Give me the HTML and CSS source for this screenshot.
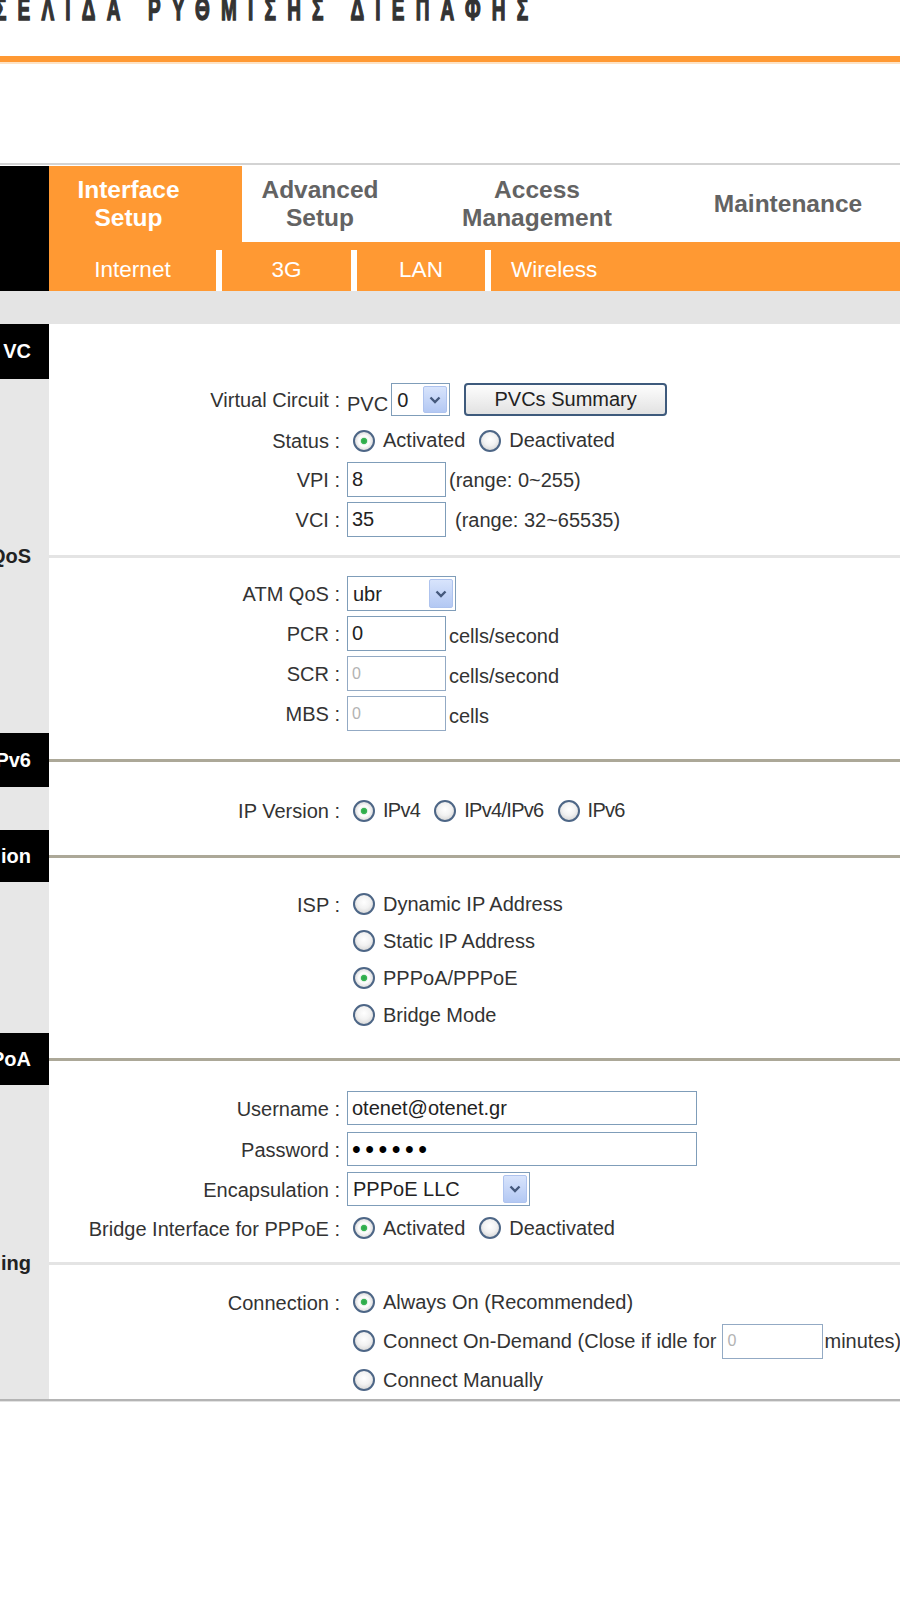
FILE: index.html
```html
<!DOCTYPE html>
<html lang="el">
<head>
<meta charset="utf-8">
<title>Interface Setup - Internet</title>
<link rel="stylesheet" href="styles.css">
</head>
<body>
<header class="page-head">
  <h1 class="title">ΣΕΛΙΔΑ ΡΥΘΜΙΣΗΣ ΔΙΕΠΑΦΗΣ</h1>
  <div class="orange-rule"></div>
</header>

<nav class="nav">
  <div class="nav-side"></div>
  <div class="nav-main">
    <div class="tabs">
      <div class="tab tab-active tab-1">Interface<br>Setup</div>
      <div class="tab tab-2">Advanced<br>Setup</div>
      <div class="tab tab-3">Access<br>Management</div>
      <div class="tab tab-4">Maintenance</div>
    </div>
    <div class="subnav">
      <div class="sub sub-internet">Internet</div>
      <div class="sep"></div>
      <div class="sub sub-3g">3G</div>
      <div class="sep"></div>
      <div class="sub sub-lan">LAN</div>
      <div class="sep"></div>
      <div class="sub sub-wireless">Wireless</div>
    </div>
  </div>
</nav>
<div class="graybar"></div>

<main class="content">
  <!-- ATM VC -->
  <div class="row head h55">
    <div class="side side-title">VC</div>
    <div class="main"></div>
  </div>
  <div class="row h40">
    <div class="side"></div>
    <div class="label">Virtual Circuit :</div>
    <div class="value">
      <span class="pre">PVC</span>
      <span class="sel sel-pvc"><select><option>0</option></select><span class="arrow"><svg viewBox="0 0 12 8" width="12" height="8"><path d="M1.5 1.5 L6 6 L10.5 1.5" fill="none" stroke="#45597c" stroke-width="2.4"/></svg></span></span>
      <button class="btn" type="button">PVCs Summary</button>
    </div>
  </div>
  <div class="row h40 pt1">
    <div class="side"></div>
    <div class="label">Status :</div>
    <div class="value">
      <label class="opt"><input class="radio" type="radio" name="status" checked>Activated</label>
      <label class="opt"><input class="radio" type="radio" name="status">Deactivated</label>
    </div>
  </div>
  <div class="row h40">
    <div class="side"></div>
    <div class="label">VPI :</div>
    <div class="value"><input class="txt" type="text" value="8"><span class="note">(range: 0~255)</span></div>
  </div>
  <div class="row h40">
    <div class="side"></div>
    <div class="label">VCI :</div>
    <div class="value"><input class="txt" type="text" value="35"><span class="note note-gap">(range: 32~65535)</span></div>
  </div>

  <!-- QoS -->
  <div class="row subhead h34">
    <div class="side side-title">QoS</div>
    <div class="main"><div class="rule-light"></div></div>
  </div>
  <div class="row h40">
    <div class="side"></div>
    <div class="label">ATM QoS :</div>
    <div class="value">
      <span class="sel sel-qos"><select><option>ubr</option></select><span class="arrow"><svg viewBox="0 0 12 8" width="12" height="8"><path d="M1.5 1.5 L6 6 L10.5 1.5" fill="none" stroke="#45597c" stroke-width="2.4"/></svg></span></span>
    </div>
  </div>
  <div class="row h40">
    <div class="side"></div>
    <div class="label">PCR :</div>
    <div class="value"><input class="txt" type="text" value="0"><span class="unit">cells/second</span></div>
  </div>
  <div class="row h40">
    <div class="side"></div>
    <div class="label">SCR :</div>
    <div class="value"><input class="txt" type="text" value="0" disabled><span class="unit">cells/second</span></div>
  </div>
  <div class="row h40">
    <div class="side"></div>
    <div class="label">MBS :</div>
    <div class="value"><input class="txt" type="text" value="0" disabled><span class="unit">cells</span></div>
  </div>

  <!-- IPv6 -->
  <div class="row head h54">
    <div class="side side-title">Pv6</div>
    <div class="main"><div class="rule-dark"></div></div>
  </div>
  <div class="row h43 pt3">
    <div class="side"></div>
    <div class="label">IP Version :</div>
    <div class="value">
      <label class="opt tight"><input class="radio" type="radio" name="ipv" checked>IPv4</label>
      <label class="opt tight"><input class="radio" type="radio" name="ipv">IPv4/IPv6</label>
      <label class="opt tight"><input class="radio" type="radio" name="ipv">IPv6</label>
    </div>
  </div>

  <!-- Encapsulation -->
  <div class="row head h52">
    <div class="side side-title">ion</div>
    <div class="main"><div class="rule-dark"></div></div>
  </div>
  <div class="row h40 pt3">
    <div class="side"></div>
    <div class="label">ISP :</div>
    <div class="value"><label class="opt"><input class="radio" type="radio" name="isp">Dynamic IP Address</label></div>
  </div>
  <div class="row h37">
    <div class="side"></div>
    <div class="label"></div>
    <div class="value"><label class="opt"><input class="radio" type="radio" name="isp">Static IP Address</label></div>
  </div>
  <div class="row h37">
    <div class="side"></div>
    <div class="label"></div>
    <div class="value"><label class="opt"><input class="radio" type="radio" name="isp" checked>PPPoA/PPPoE</label></div>
  </div>
  <div class="row h37">
    <div class="side"></div>
    <div class="label"></div>
    <div class="value"><label class="opt"><input class="radio" type="radio" name="isp">Bridge Mode</label></div>
  </div>

  <!-- PPPoE/PPPoA -->
  <div class="row head h52">
    <div class="side side-title">PoA</div>
    <div class="main"><div class="rule-dark"></div></div>
  </div>
  <div class="row h43 pt2">
    <div class="side"></div>
    <div class="label">Username :</div>
    <div class="value"><input class="txt txt-wide" type="text" value="otenet@otenet.gr"></div>
  </div>
  <div class="row h41">
    <div class="side"></div>
    <div class="label">Password :</div>
    <div class="value"><input class="txt txt-wide txt-pass" type="password" value="otenet"></div>
  </div>
  <div class="row h39">
    <div class="side"></div>
    <div class="label">Encapsulation :</div>
    <div class="value">
      <span class="sel sel-enc"><select><option>PPPoE LLC</option></select><span class="arrow"><svg viewBox="0 0 12 8" width="12" height="8"><path d="M1.5 1.5 L6 6 L10.5 1.5" fill="none" stroke="#45597c" stroke-width="2.4"/></svg></span></span>
    </div>
  </div>
  <div class="row h39">
    <div class="side"></div>
    <div class="label">Bridge Interface for PPPoE :</div>
    <div class="value">
      <label class="opt"><input class="radio" type="radio" name="bridge" checked>Activated</label>
      <label class="opt"><input class="radio" type="radio" name="bridge">Deactivated</label>
    </div>
  </div>

  <!-- Connection Setting -->
  <div class="row subhead h33">
    <div class="side side-title">ing</div>
    <div class="main"><div class="rule-light"></div></div>
  </div>
  <div class="row h41 pt1">
    <div class="side"></div>
    <div class="label">Connection :</div>
    <div class="value"><label class="opt"><input class="radio" type="radio" name="conn" checked>Always On (Recommended)</label></div>
  </div>
  <div class="row h39">
    <div class="side"></div>
    <div class="label"></div>
    <div class="value"><label class="opt"><input class="radio" type="radio" name="conn">Connect On-Demand (Close if idle for</label><input class="txt txt-idle" type="text" value="0" disabled><span class="minutes">minutes)</span></div>
  </div>
  <div class="row h39">
    <div class="side"></div>
    <div class="label"></div>
    <div class="value"><label class="opt"><input class="radio" type="radio" name="conn">Connect Manually</label></div>
  </div>
</main>
<div class="bottom-rule"></div>
</body>
</html>
```

FILE: styles.css
```css
* { box-sizing: border-box; }

html, body {
  margin: 0;
  padding: 0;
  background: #fff;
}

body {
  width: 900px;
  overflow: hidden;
  font-family: "Liberation Sans", Arial, sans-serif;
  color: #333;
}

/* ---------- page heading ---------- */
.title {
  margin: 0 0 0 -5px;
  padding-top: 4px;
  height: 24px;
  font-size: 19px;
  line-height: 20px;
  font-weight: bold;
  letter-spacing: 11.2px;
  color: #333;
  -webkit-text-stroke: 0.9px #333;
  white-space: nowrap;
  transform: scaleY(1.68);
  transform-origin: 0 20.5px;
}

.orange-rule {
  margin-top: 32px;
  height: 8px;
  border-top: 6px solid #ff9933;
  border-bottom: 2px solid #fde3c6;
}

/* ---------- navigation ---------- */
.nav {
  margin-top: 99px;
  display: flex;
  border-top: 2px solid #d3d3d3;
  padding-top: 1px;
}

.nav-side {
  width: 49px;
  flex: none;
  background: #000;
}

.nav-main {
  flex: 1;
}

.tabs {
  display: flex;
  height: 76px;
}

.tab {
  display: flex;
  align-items: center;
  justify-content: center;
  text-align: center;
  font-size: 24.5px;
  line-height: 28px;
  font-weight: bold;
  color: #636363;
  background: #fff;
}

.tab-active {
  background: #ff9933;
  color: #fff;
}

.tab-1 { width: 193px; padding-right: 34px; }
.tab-2 { width: 156px; }
.tab-3 { width: 278px; }
.tab-4 { flex: 1; }

.subnav {
  display: flex;
  align-items: flex-end;
  height: 49px;
  background: #ff9933;
}

.sub {
  height: 49px;
  padding-top: 6px;
  display: flex;
  align-items: center;
  justify-content: center;
  color: #fff;
  font-size: 22.5px;
}

.sub-internet { width: 167px; }
.sub-3g { width: 129px; }
.sub-lan { width: 128px; }
.sub-wireless { padding-left: 20px; }

.sep {
  width: 6px;
  height: 41px;
  background: #fff;
}

.graybar {
  height: 33px;
  background: #e4e4e4;
}

/* ---------- form rows ---------- */
.row {
  display: grid;
  grid-template-columns: 49px 291px 1fr;
}

.h33 { height: 33px; }
.h34 { height: 34px; }
.h37 { height: 37px; }
.h39 { height: 39px; }
.h40 { height: 40px; }
.h41 { height: 41px; }
.h43 { height: 43px; }
.h52 { height: 52px; }
.h54 { height: 54px; }
.h55 { height: 55px; }

.side {
  background: #e7e7e7;
}

.side-title {
  display: flex;
  align-items: center;
  justify-content: flex-end;
  padding-right: 18px;
  overflow: hidden;
  white-space: nowrap;
  font-size: 20px;
  font-weight: bold;
  color: #222;
}

.head .side {
  background: #000;
  color: #fff;
}

.head .main,
.subhead .main {
  grid-column: 2 / 4;
  display: flex;
  align-items: center;
  background: #fff;
}

.rule-dark {
  width: 100%;
  height: 3px;
  background: #aca898;
}

.rule-light {
  width: 100%;
  height: 3px;
  background: #e4e4e4;
}

.label {
  display: flex;
  align-items: center;
  justify-content: flex-end;
  padding-top: 3px;
  font-size: 20px;
  color: #333;
  white-space: nowrap;
}

.value {
  display: flex;
  align-items: center;
  padding-left: 7px;
  padding-top: 1px;
  font-size: 20px;
  color: #333;
  white-space: nowrap;
}

.pt1 > .label { padding-top: 5px; }
.pt1 > .value { padding-top: 3px; }
.pt2 > .label { padding-top: 5px; }
.pt2 > .value { padding-top: 3px; }
.pt3 > .label { padding-top: 6px; }
.pt3 > .value { padding-top: 4px; }

.pre {
  font-size: 20px;
  margin: 10px 3px 0 0;
}

.note { margin-left: 3px; padding-top: 2px; }
.note-gap { margin-left: 9px; }

.unit {
  margin-left: 3px;
  padding-top: 5px;
}

.minutes { margin-left: 1px; }

/* radio buttons */
.opt {
  display: inline-flex;
  align-items: center;
}

.opt + .opt { margin-left: 8px; }

.tight { letter-spacing: -0.7px; }

.radio {
  -webkit-appearance: none;
  appearance: none;
  flex: none;
  width: 22px;
  height: 22px;
  margin: 0 8px 0 6px;
  border: 2px solid #4d6686;
  border-radius: 50%;
  background: radial-gradient(circle at 50% 40%, #ffffff 0%, #f2f2f2 45%, #c9c9c9 100%);
}

.radio:checked {
  background: radial-gradient(circle, #27a844 0, #39b455 2.8px, #e9f3ea 3.6px, #ffffff 5px, #eeeeee 7px, #c9c9c9 100%);
}

/* text inputs */
.txt {
  width: 99px;
  height: 35px;
  margin: 0;
  padding: 0 4px;
  border: 1px solid #7f9db9;
  background: #fff;
  font-family: "Liberation Sans", Arial, sans-serif;
  font-size: 20px;
  color: #222;
}

.txt:disabled {
  color: #b3b3b3;
  font-size: 16px;
  border-color: #93aac4;
  background: #fff;
}

.txt-wide {
  width: 350px;
  height: 34px;
}

.txt-pass {
  font-size: 25px;
  letter-spacing: 4.5px;
  color: #000;
}

.txt-idle {
  width: 101px;
  margin-left: 6px;
}

/* select boxes */
.sel {
  display: inline-flex;
  align-items: stretch;
  height: 33px;
  padding: 2px;
  border: 1px solid #7f9db9;
  background: #fff;
}

.sel select {
  -webkit-appearance: none;
  appearance: none;
  flex: 1;
  min-width: 0;
  margin: 0;
  padding: 0 0 0 3px;
  border: none;
  outline: none;
  background: transparent;
  font-family: "Liberation Sans", Arial, sans-serif;
  font-size: 20px;
  color: #222;
}

.arrow {
  flex: none;
  width: 24px;
  display: flex;
  align-items: center;
  justify-content: center;
  background: linear-gradient(#d8e4fc, #b3c8f3);
  border: 1px solid #aec3ee;
  border-radius: 2px;
}

.sel-pvc { width: 59px; }
.sel-qos { width: 109px; height: 35px; }
.sel-enc { width: 183px; height: 34px; }

/* button */
.btn {
  width: 203px;
  height: 33px;
  margin-left: 14px;
  padding: 0;
  border: 2px solid #3e5a7c;
  border-radius: 4px;
  background: linear-gradient(#fdfdfd, #e2e2e2);
  font-family: "Liberation Sans", Arial, sans-serif;
  font-size: 20px;
  color: #222;
}

/* ---------- bottom ---------- */
.bottom-rule {
  height: 3px;
  border-top: 2px solid #b4b4b4;
  border-bottom: 1px solid #e2e2e2;
}
```
